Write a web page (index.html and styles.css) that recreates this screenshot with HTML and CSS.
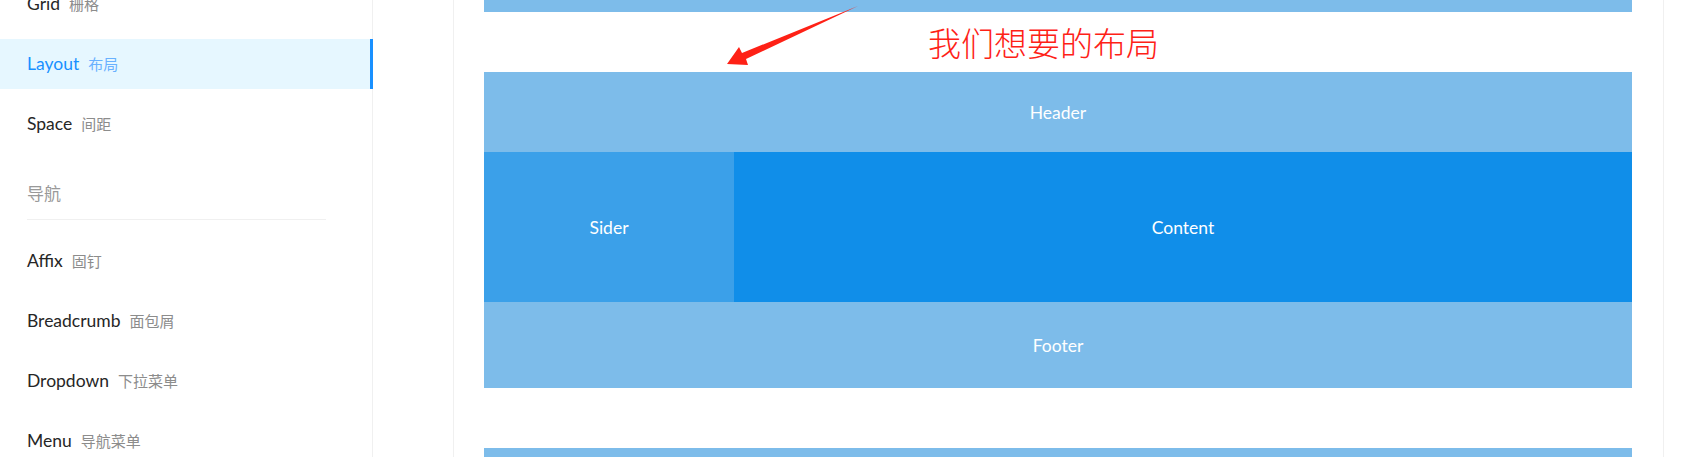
FILE: index.html
```html
<!DOCTYPE html>
<html lang="zh-CN">
<head>
<meta charset="utf-8">
<title>Layout 布局</title>
<link rel="stylesheet" href="styles.css">
</head>
<body>
<div class="page">
  <aside class="sidebar">
    <ul class="menu">
      <li class="item item-first">Grid<span class="sub">栅格</span></li>
      <li class="item active">Layout<span class="sub">布局</span></li>
      <li class="item">Space<span class="sub">间距</span></li>
    </ul>
    <div class="group-title">导航</div>
    <ul class="menu">
      <li class="item">Affix<span class="sub">固钉</span></li>
      <li class="item">Breadcrumb<span class="sub">面包屑</span></li>
      <li class="item">Dropdown<span class="sub">下拉菜单</span></li>
      <li class="item">Menu<span class="sub">导航菜单</span></li>
    </ul>
  </aside>
  <div class="gutter"></div>
  <main class="main">
    <div class="bar prev"></div>
    <section class="demo">
      <div class="bar header">Header</div>
      <div class="middle">
        <div class="sider">Sider</div>
        <div class="content">Content</div>
      </div>
      <div class="bar footer">Footer</div>
    </section>
    <div class="bar next"></div>
  </main>
  <div class="edge"></div>

  <div class="note">我们想要的布局</div>
  <svg class="arrow" width="1681" height="457" viewBox="0 0 1681 457" aria-hidden="true">
    <polygon points="858,6 746,59 748,65 727,64 739,47 742,53" fill="#fe2116"/>
  </svg>
</div>
</body>
</html>
```
FILE: styles.css
```css
html, body {
  margin: 0;
  padding: 0;
  background: #ffffff;
  overflow: hidden;
}

.page {
  position: relative;
  display: flex;
  width: 1681px;
  height: 457px;
  overflow: hidden;
  font-family: Lato, "Noto Sans CJK SC", sans-serif;
}

.sidebar {
  width: 372px;
  flex: none;
  border-right: 1px solid #f0f0f0;
  height: 457px;
}

.menu {
  list-style: none;
  margin: 0;
  padding: 0;
}

.item {
  position: relative;
  height: 50px;
  line-height: 50px;
  margin-bottom: 10px;
  margin-right: -1px;
  padding-left: 27px;
  font-size: 17.5px;
  color: #262626;
  white-space: nowrap;
}

.item-first {
  margin-top: -21px;
}

.sub {
  margin-left: 9px;
  font-size: 15px;
  color: #8c8c8c;
  font-family: "Noto Sans CJK SC", sans-serif;
}

.item.active {
  background: #e6f7ff;
  color: #1890ff;
}

.item.active .sub {
  color: #69b1ff;
}

.item.active::after {
  content: "";
  position: absolute;
  right: 0;
  top: 0;
  bottom: 0;
  width: 3px;
  background: #1890ff;
}

.group-title {
  margin: 0 46px 16px 27px;
  padding-top: 19px;
  padding-bottom: 11px;
  line-height: 30px;
  height: 30px;
  font-size: 17px;
  color: #999999;
  font-family: "Noto Sans CJK SC", sans-serif;
  border-bottom: 1px solid #f0f0f0;
}

.gutter {
  width: 80px;
  flex: none;
}

.main {
  width: 1148px;
  flex: none;
  padding: 0 31px 0 30px;
  border-left: 1px solid #f0f0f0;
  border-right: 1px solid #f0f0f0;
  display: flex;
  flex-direction: column;
}

.edge {
  flex: 1;
}

.bar {
  background: #7dbcea;
  color: #ffffff;
  display: flex;
  align-items: center;
  justify-content: center;
  font-size: 17.5px;
}

.prev {
  height: 12px;
  flex: none;
}

.demo {
  margin-top: 60px;
  display: flex;
  flex-direction: column;
}

.header {
  height: 80px;
}

.middle {
  display: flex;
  height: 150px;
}

.sider {
  width: 250px;
  background: #3ba0e9;
  color: #ffffff;
  font-size: 17.5px;
  display: flex;
  align-items: center;
  justify-content: center;
}

.content {
  flex: 1;
  background: #108ee9;
  color: #ffffff;
  font-size: 17.5px;
  display: flex;
  align-items: center;
  justify-content: center;
}

.footer {
  height: 86px;
}

.next {
  margin-top: 60px;
  height: 40px;
  flex: none;
}

.note {
  position: absolute;
  left: 928px;
  top: 24px;
  font-family: "Noto Sans CJK SC", sans-serif;
  font-size: 33px;
  line-height: 36px;
  font-weight: 300;
  color: #fe2116;
  white-space: nowrap;
}

.arrow {
  position: absolute;
  left: 0;
  top: 0;
  pointer-events: none;
}
```
